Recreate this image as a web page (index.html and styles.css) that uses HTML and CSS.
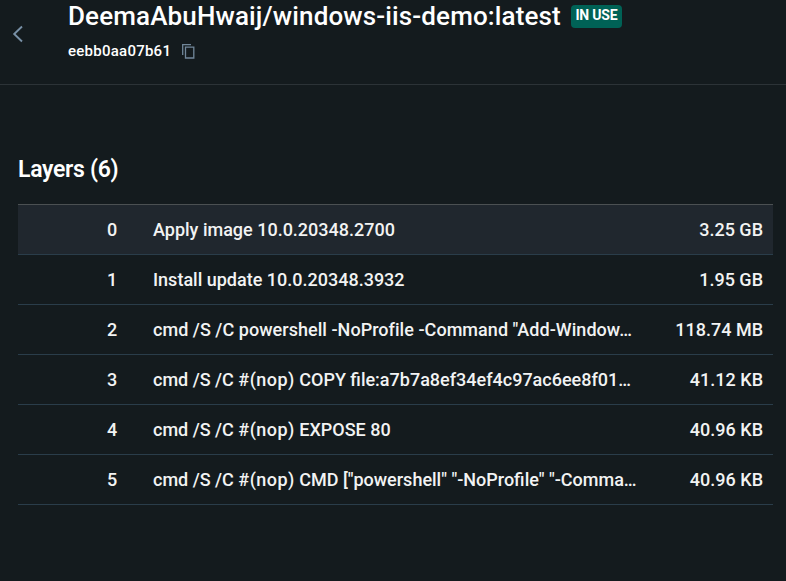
FILE: index.html
```html
<!DOCTYPE html>
<html lang="en">
<head>
<meta charset="utf-8">
<title>Image details</title>
<link rel="stylesheet" href="styles.css">
</head>
<body>
<header class="header">
  <svg class="back" viewBox="0 0 12 18" fill="none"><path d="M10 1.5 2.2 9 10 16.5" stroke="currentColor" stroke-width="1.9"/></svg>
  <div class="heading">
    <div class="title-row"><h1 class="title">DeemaAbuHwaij/windows-iis-demo:latest</h1><span class="badge">IN USE</span></div>
    <div class="id-row"><span class="id">eebb0aa07b61</span><svg class="copy" viewBox="0 0 13 15" fill="none" stroke="currentColor"><path d="M.7 11V.7H9M3.5 3.2h8.3v10.8H3.5z" stroke-width="1.3"/></svg></div>
  </div>
</header>
<main class="layers">
  <h2 class="layers-title">Layers (6)</h2>
  <ul class="list">
    <li class="row selected"><span class="index">0</span><span class="command">Apply image 10.0.20348.2700</span><span class="size">3.25 GB</span></li>
    <li class="row"><span class="index">1</span><span class="command">Install update 10.0.20348.3932</span><span class="size">1.95 GB</span></li>
    <li class="row"><span class="index">2</span><span class="command long">cmd /S /C powershell -NoProfile -Command "Add-Window…</span><span class="size">118.74 MB</span></li>
    <li class="row"><span class="index">3</span><span class="command">cmd /S /C <span class="nop">#(nop)</span> COPY file:a7b7a8ef34ef4c97ac6ee8f01…</span><span class="size">41.12 KB</span></li>
    <li class="row"><span class="index">4</span><span class="command">cmd /S /C <span class="nop">#(nop)</span> EXPOSE 80</span><span class="size">40.96 KB</span></li>
    <li class="row"><span class="index">5</span><span class="command">cmd /S /C <span class="nop">#(nop)</span> CMD ["powershell" "-NoProfile" "-Comma…</span><span class="size">40.96 KB</span></li>
  </ul>
</main>
</body>
</html>
```
FILE: styles.css
```css
* { box-sizing: border-box; }
body { margin: 0; height: 581px; overflow: hidden; background: #141b1e; color: #fff; font-family: Roboto, "Liberation Sans", sans-serif; font-weight: 500; }
.header { display: flex; height: 85px; border-bottom: 1px solid #2c3337; }
.back { width: 12px; height: 18px; margin: 25px 44px 0 12px; color: #7890a6; }
.title-row { display: flex; align-items: center; height: 32px; gap: 10px; }
.title { margin: 0; font-size: 26px; line-height: 32px; font-weight: 500; letter-spacing: .14px; white-space: nowrap; }
.badge { height: 23px; width: 51px; border-radius: 4px; background: #006256; font-size: 14px; font-weight: 700; letter-spacing: -.2px; line-height: 21px; text-align: center; white-space: nowrap; }
.id-row { display: flex; align-items: center; gap: 11px; height: 20px; margin-top: 9px; font-size: 15px; line-height: 20px; }
.id { letter-spacing: .25px; }
.copy { width: 13px; height: 15px; margin-top: 1px; color: #71879a; }
.layers { padding: 71px 13px 0 18px; }
.layers-title { margin: 0; font-size: 23px; line-height: 28px; font-weight: 600; letter-spacing: -.3px; }
.list { list-style: none; margin: 20px 0 0; padding: 0; border-top: 1px solid #4b5052; }
.row { display: grid; grid-template-columns: 135px 1fr 120px; height: 50px; padding-right: 10px; border-bottom: 1px solid #2a3d4a; color: #f2f3f3; font-size: 18px; line-height: 50px; white-space: nowrap; }
.selected { background: #20272e; }
.index { padding-left: 89px; }
.long { letter-spacing: .04px; }
.nop { letter-spacing: .45px; }
.size { text-align: right; }
```
